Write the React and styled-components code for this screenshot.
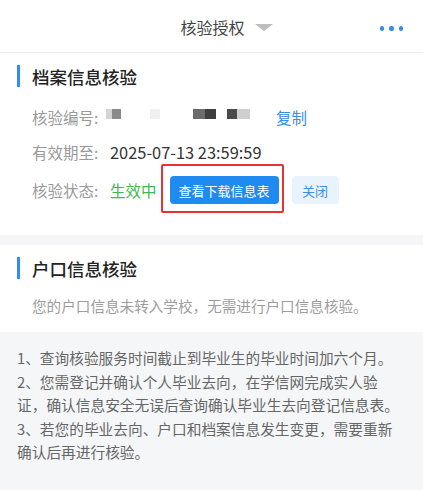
import React from 'react';
import styled, { createGlobalStyle } from 'styled-components';

const GlobalStyle = createGlobalStyle`
  html, body {
    margin: 0;
    padding: 0;
    background: #ffffff;
  }
  body {
    font-family: "Noto Sans CJK SC", "Noto Sans", sans-serif;
    color: #333;
  }
`;

const Page = styled.div`
  width: 423px;
  min-height: 490px;
  background: #f5f6f8;
`;

const Header = styled.div`
  height: 53px;
  display: flex;
  align-items: center;
  justify-content: center;
  position: relative;
  background: #fff;
  border-bottom: 1px solid #eeeeee;
  box-sizing: border-box;
`;

const HeaderTitle = styled.div`
  display: flex;
  align-items: center;
  gap: 10px;
  font-size: 16px;
  color: #444;
  margin-left: 30px;
  padding-top: 2px;
`;

const Caret = styled.span`
  width: 0;
  height: 0;
  border-left: 9px solid transparent;
  border-right: 9px solid transparent;
  border-top: 7px solid #bdbdbd;
  margin-top: 0;
`;

const MoreDots = styled.div`
  position: absolute;
  right: 20px;
  top: 26px;
  display: flex;
  gap: 5px;
  span {
    width: 4.5px;
    height: 4.5px;
    border-radius: 50%;
    background: #2f8cf0;
  }
`;

const Section = styled.section`
  background: #fff;
  padding: ${(p) => p.$pad};
`;

const SectionTitle = styled.h3`
  margin: 0;
  display: flex;
  align-items: center;
  font-size: 17.5px;
  font-weight: 500;
  color: #222;
  height: 22px;
  &::before {
    content: '';
    width: 3px;
    height: 22px;
    background: #2f8cf0;
    margin: 0 12px 0 17px;
  }
`;

const InfoRow = styled.div`
  display: flex;
  align-items: center;
  padding-left: 32px;
  height: ${(p) => p.$h || 24}px;
  margin-top: ${(p) => p.$mt}px;
  font-size: 15.5px;
`;

const Label = styled.span`
  color: #9a9a9a;
  width: 78px;
  flex-shrink: 0;
  padding-top: ${(p) => p.$nudge || 0}px;
`;

const Value = styled.span`
  color: ${(p) => (p.$green ? '#3dba4e' : '#333')};
  font-size: ${(p) => (p.$green ? 15.5 : 16.4)}px;
  padding-top: ${(p) => p.$nudge || 0}px;
`;

const MaskGroup = styled.div`
  width: 170px;
  height: 10px;
  margin: -6px 0 0 -4px;
  position: relative;
`;

const Mask = styled.span`
  position: absolute;
  top: 0;
  height: 10px;
  background: ${(p) => p.$c};
`;

const LinkText = styled.span`
  color: #3a8ee6;
  font-size: 15.5px;
`;

const Highlight = styled.div`
  border: 2px solid #e8322f;
  border-radius: 2px;
  padding: 10px 3px 7px 7px;
  margin-left: 4px;
`;

const Button = styled.button`
  display: block;
  height: 28px;
  border: none;
  border-radius: 4px;
  font-family: inherit;
  font-size: 13px;
  padding: 0;
  width: ${(p) => p.$w}px;
  background: ${(p) => (p.$primary ? '#1f8af0' : '#e9f3fd')};
  color: ${(p) => (p.$primary ? '#fff' : '#3a8ee6')};
  margin-left: ${(p) => p.$ml || 0}px;
`;

const Gap = styled.div`
  height: 10px;
  background: #f4f5f7;
`;

const Hint = styled.p`
  margin: 16px 0 0 32px;
  font-size: 14.6px;
  line-height: 21px;
  color: #9d9d9d;
`;

const Notice = styled.div`
  padding: 14px 22px 20px 17px;
  font-size: 14.7px;
  line-height: 23.6px;
  color: #666;
  p {
    margin: 0;
  }
`;

const masks = [
  { l: 0, w: 6, c: '#d4d4d4' },
  { l: 6, w: 9, c: '#8a8a8a' },
  { l: 44, w: 10, c: '#f0f0f0' },
  { l: 87, w: 12, c: '#6c6c6c' },
  { l: 99, w: 11, c: '#3f3f3f' },
  { l: 121, w: 10, c: '#4a4a4a' },
  { l: 131, w: 13, c: '#cfcfcf' },
];

export default function App() {
  return (
    <Page>
      <GlobalStyle />
      <Header>
        <HeaderTitle>
          核验授权
          <Caret />
        </HeaderTitle>
        <MoreDots>
          <span />
          <span />
          <span />
        </MoreDots>
      </Header>

      <Section $pad="12px 0 22px">
        <SectionTitle>档案信息核验</SectionTitle>
        <InfoRow $mt={18}>
          <Label>核验编号:</Label>
          <MaskGroup>
            {masks.map((m, i) => (
              <Mask key={i} $c={m.c} style={{ left: m.l, width: m.w }} />
            ))}
          </MaskGroup>
          <LinkText>复制</LinkText>
        </InfoRow>
        <InfoRow $mt={11}>
          <Label>有效期至:</Label>
          <Value>2025-07-13 23:59:59</Value>
        </InfoRow>
        <InfoRow $h={49} $mt={0}>
          <Label $nudge={3}>核验状态:</Label>
          <Value $green $nudge={3}>
            生效中
          </Value>
          <Highlight>
            <Button $primary $w={109}>
              查看下载信息表
            </Button>
          </Highlight>
          <Button $w={47} $ml={8} style={{ marginTop: 3 }}>
            关闭
          </Button>
        </InfoRow>
      </Section>

      <Gap />

      <Section $pad="12px 0 16px">
        <SectionTitle>户口信息核验</SectionTitle>
        <Hint>您的户口信息未转入学校，无需进行户口信息核验。</Hint>
      </Section>

      <Notice>
        <p>1、查询核验服务时间截止到毕业生的毕业时间加六个月。</p>
        <p>2、您需登记并确认个人毕业去向，在学信网完成实人验证，确认信息安全无误后查询确认毕业生去向登记信息表。</p>
        <p>3、若您的毕业去向、户口和档案信息发生变更，需要重新确认后再进行核验。</p>
      </Notice>
    </Page>
  );
}
